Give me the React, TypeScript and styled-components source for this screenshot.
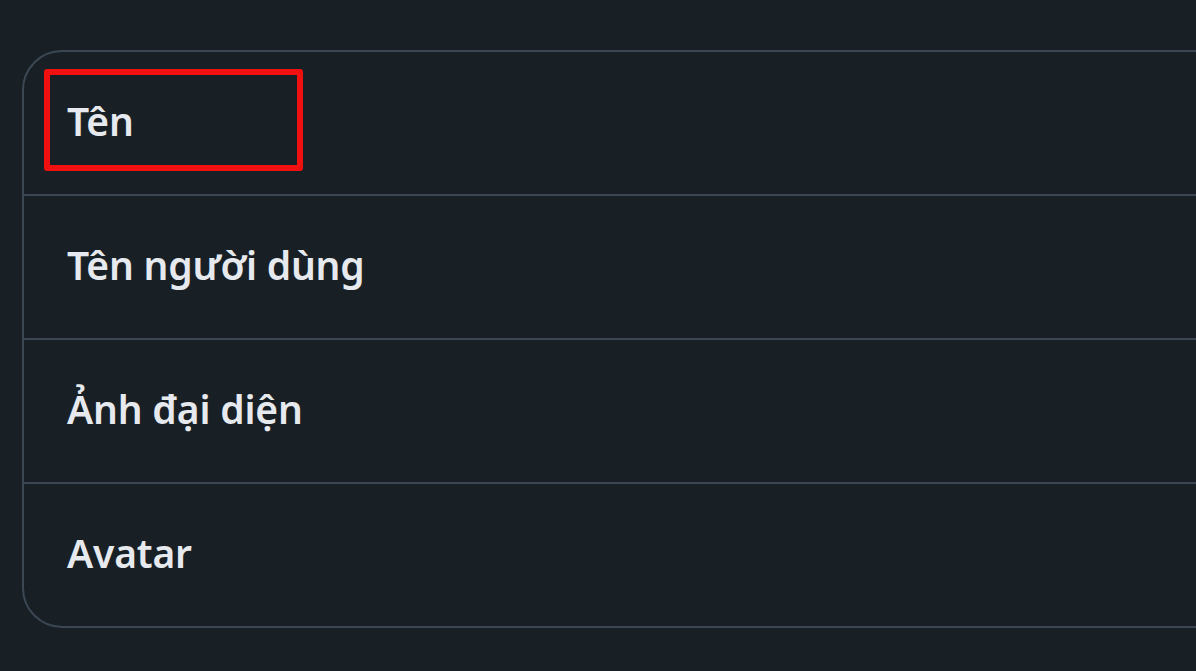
import React from "react";
import styled, { createGlobalStyle } from "styled-components";

const Global = createGlobalStyle`
  html, body { margin: 0; padding: 0; background: #181f25; }
  body { font-family: "Noto Sans", "Liberation Sans", sans-serif; }
`;

const Page = styled.div`
  width: 1196px;
  height: 671px;
  overflow: hidden;
  background: #181f25;
  padding: 50px 0 0 22px;
  box-sizing: border-box;
`;

const Card = styled.div`
  width: 1240px;
  border: 2px solid #3b4853;
  border-radius: 40px;
  display: flex;
  flex-direction: column;
  box-sizing: border-box;
`;

const Row = styled.div<{ $last?: boolean }>`
  height: ${(p) => (p.$last ? 142 : 144)}px;
  display: flex;
  align-items: center;
  padding: 0 0 6px 43px;
  border-bottom: ${(p) => (p.$last ? "none" : "2px solid #3b4853")};
  box-sizing: border-box;
  position: relative;
`;

const Label = styled.span`
  color: #e6e9ee;
  font-size: 39px;
  font-weight: 600;
  letter-spacing: -0.2px;
`;

const Highlight = styled.div`
  position: absolute;
  left: 20px;
  top: 17px;
  width: 259px;
  height: 102px;
  border: 6px solid #f01010;
  border-radius: 3px;
  box-sizing: border-box;
`;

const items = ["Tên", "Tên người dùng", "Ảnh đại diện", "Avatar"];

export default function App() {
  return (
    <>
      <Global />
      <Page>
        <Card>
          {items.map((t, i) => (
            <Row key={t} $last={i === items.length - 1}>
              {i === 0 && <Highlight />}
              <Label>{t}</Label>
            </Row>
          ))}
        </Card>
      </Page>
    </>
  );
}
